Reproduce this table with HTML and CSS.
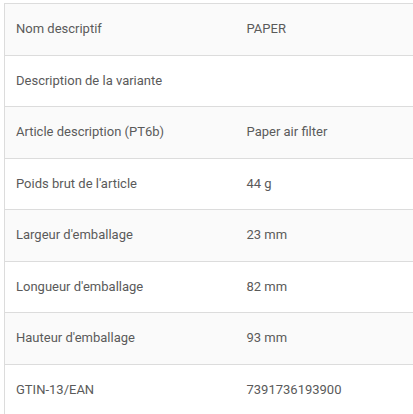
FILE: index.html
```html
<!DOCTYPE html>
<html lang="fr">
<head>
<meta charset="utf-8">
<link rel="stylesheet" href="styles.css">
</head>
<body>
<div class="wrap">
<table class="specs">
<colgroup><col class="c1"><col class="c2"></colgroup>
<tbody>
<tr><td>Nom descriptif</td><td>PAPER</td></tr>
<tr><td>Description de la variante</td><td></td></tr>
<tr><td>Article description (PT6b)</td><td>Paper air filter</td></tr>
<tr><td>Poids brut de l'article</td><td>44 g</td></tr>
<tr><td>Largeur d'emballage</td><td>23 mm</td></tr>
<tr><td>Longueur d'emballage</td><td>82 mm</td></tr>
<tr><td>Hauteur d'emballage</td><td>93 mm</td></tr>
<tr><td>GTIN-13/EAN</td><td>7391736193900</td></tr>
</tbody>
</table>
</div>
</body>
</html>
```
FILE: styles.css
```css
html, body {
  margin: 0;
  padding: 0;
  background: #fff;
  overflow: hidden;
}
.wrap {
  padding: 3px 0 0 4px;
}
.specs {
  border-collapse: collapse;
  table-layout: fixed;
  width: 409px;
  border-left: 1px solid #dcdcdc;
  border-top: 1px solid #dcdcdc;
  font-family: Roboto, "Liberation Sans", sans-serif;
  font-size: 13px;
  line-height: 18.57px;
  color: #5a5a5a;
}
.specs .c1 {
  width: 231px;
}
.specs td {
  padding: 16px 11px;
  border-bottom: 1px solid #dcdcdc;
  vertical-align: middle;
  text-align: left;
  height: 18.57px;
  white-space: nowrap;
}
.specs tr:nth-child(odd) {
  background: #fafafa;
}
.specs tr:nth-child(even) {
  background: #fff;
}
```
